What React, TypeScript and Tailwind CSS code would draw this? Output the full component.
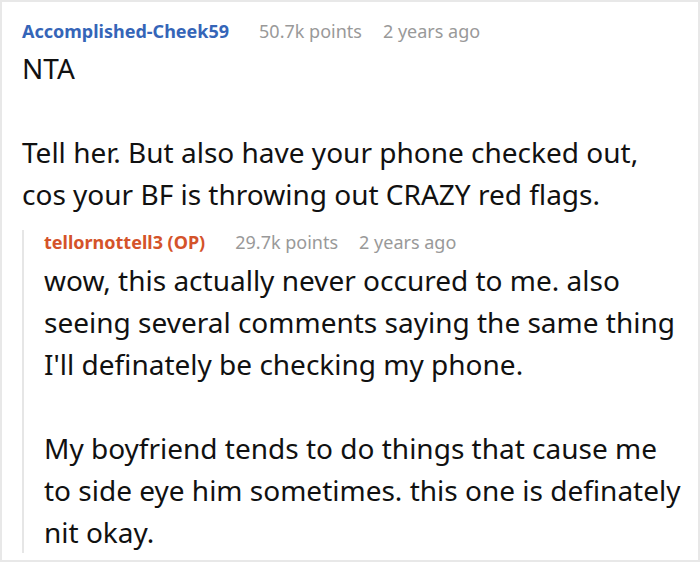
import React from 'react';

type Comment = {
  author: string;
  op?: boolean;
  points: string;
  age: string;
  paragraphs: string[];
  replies?: Comment[];
};

const thread: Comment = {
  author: 'Accomplished-Cheek59',
  points: '50.7k points',
  age: '2 years ago',
  paragraphs: [
    'NTA',
    'Tell her. But also have your phone checked out, cos your BF is throwing out CRAZY red flags.',
  ],
  replies: [
    {
      author: 'tellornottell3 (OP)',
      op: true,
      points: '29.7k points',
      age: '2 years ago',
      paragraphs: [
        "wow, this actually never occured to me. also seeing several comments saying the same thing I'll definately be checking my phone.",
        'My boyfriend tends to do things that cause me to side eye him sometimes. this one is definately nit okay.',
      ],
    },
  ],
};

function CommentBlock({ comment, nested }: { comment: Comment; nested?: boolean }) {
  return (
    <div>
      <div
        className={`flex items-center gap-[21px] text-[18px] leading-[24px] ${nested ? '-mt-[11px]' : ''}`}
      >
        <span className={`mr-[9px] font-bold ${comment.op ? 'text-[#d4532a]' : 'text-[#3565b8]'}`}>
          {comment.author}
        </span>
        <span className="text-[#999999]">{comment.points}</span>
        <span className="text-[#999999]">{comment.age}</span>
      </div>
      <div
        className={`flex flex-col gap-[42px] text-[28px] leading-[42px] text-[#111111] ${nested ? 'mt-[5px] -mb-[11px]' : 'mt-[4px]'}`}
      >
        {comment.paragraphs.map((p, i) => (
          <p key={i}>{p}</p>
        ))}
      </div>
      {comment.replies?.map((r, i) => (
        <div key={i} className="mt-[26px] border-l-2 border-[#e6e6e6] pl-[20px]">
          <CommentBlock comment={r} nested />
        </div>
      ))}
    </div>
  );
}

export default function App() {
  return (
    <div
      className="h-[562px] w-[700px] overflow-hidden border-2 border-[#e8e8e8] bg-white pl-[20px] pr-[14px] pt-[17px]"
      style={{ fontFamily: '"Noto Sans", "Open Sans", sans-serif' }}
    >
      <CommentBlock comment={thread} />
    </div>
  );
}
